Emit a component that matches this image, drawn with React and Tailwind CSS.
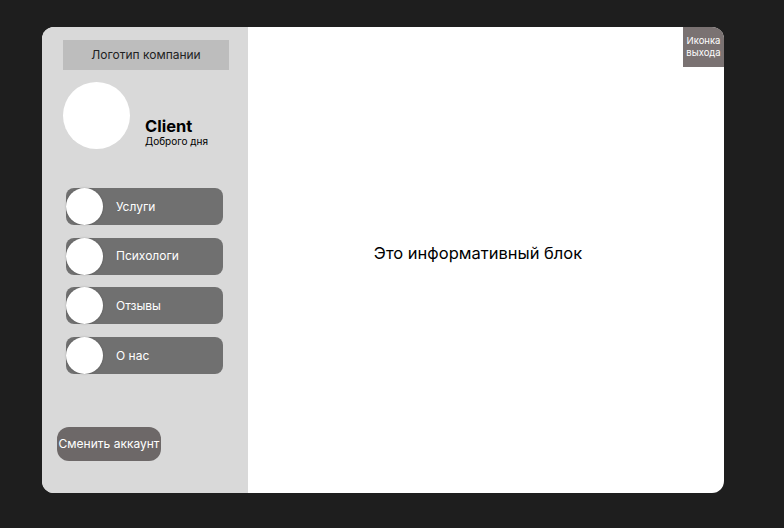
const menu = ["Услуги", "Психологи", "Отзывы", "О нас"];

export default function App() {
  return (
    <div className="h-[528px] w-[784px] bg-[#1e1e1e] pt-[27px] pl-[42px] font-['Inter',sans-serif]">
      <div className="relative flex h-[466px] w-[682px] overflow-hidden rounded-[12px] bg-white">
        <aside className="flex w-[206px] flex-col bg-[#d9d9d9]">
          <div className="ml-[21px] mt-[13px] flex h-[30px] w-[166px] items-center justify-center bg-[#bdbdbd] text-[12px] text-[#222]">
            Логотип компании
          </div>

          <div className="ml-[21px] mt-[12px] flex">
            <div className="h-[67px] w-[67px] rounded-full bg-white" />
            <div className="ml-[15px] mt-[35px] flex flex-col">
              <span className="text-[16.5px] font-bold leading-[18px] text-black">Client</span>
              <span className="text-[10px] leading-[13px] text-black">Доброго дня</span>
            </div>
          </div>

          <nav className="ml-[24px] mt-[39px] flex flex-col gap-[12.7px]">
            {menu.map((item) => (
              <button
                key={item}
                className="flex h-[37px] w-[157px] items-center rounded-[8px] bg-[#707070] text-left"
              >
                <span className="h-[37px] w-[37px] shrink-0 rounded-full bg-white shadow-[0_0_2px_rgba(0,0,0,0.25)]" />
                <span className="ml-[13px] text-[12px] text-white">{item}</span>
              </button>
            ))}
          </nav>

          <button className="mb-[32px] ml-[15px] mt-auto flex h-[34px] w-[104px] items-center justify-center rounded-[12px] bg-[#6d6868] text-[12px] text-white">
            Сменить аккаунт
          </button>
        </aside>

        <main className="flex flex-1 items-center justify-center pr-[16px] pb-[14px]">
          <p className="text-[16.5px] text-black">Это информативный блок</p>
        </main>

        <div className="absolute right-0 top-0 flex h-[40px] w-[41px] items-center justify-center bg-[#7a7272] text-center text-[9.5px] leading-[12px] text-white">
          Иконка выхода
        </div>
      </div>
    </div>
  );
}
